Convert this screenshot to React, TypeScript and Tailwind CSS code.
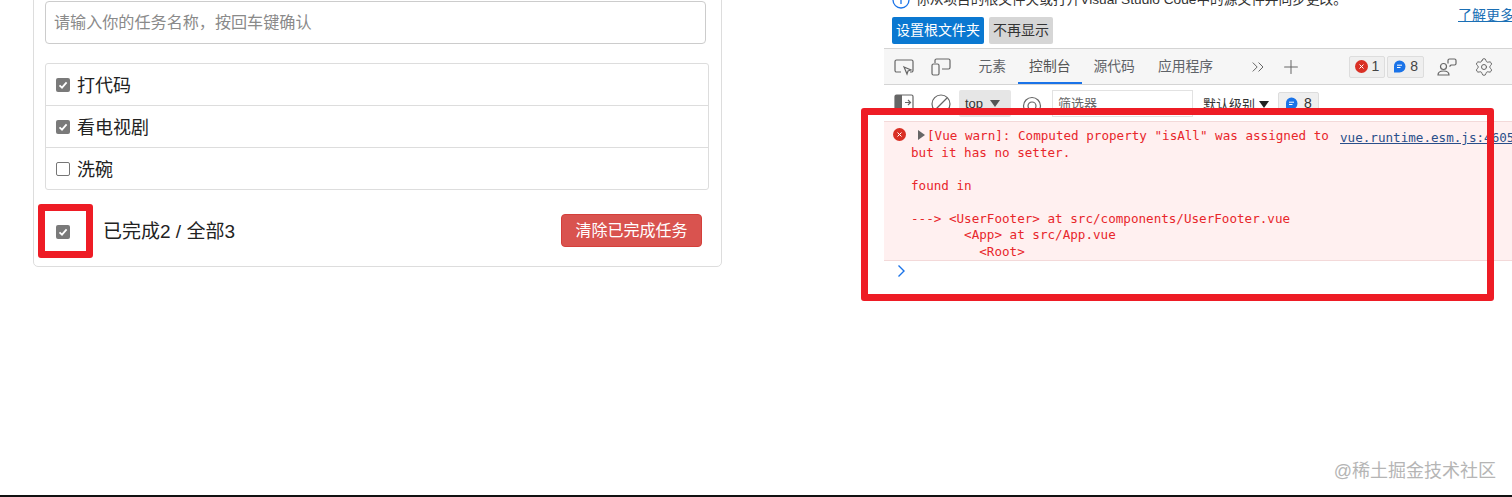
import { ChevronsRight, Plus, Settings } from "lucide-react";

const cjk = "font-['Liberation_Sans','Noto_Sans_CJK_SC',sans-serif]";

function Check({ checked }: { checked?: boolean }) {
  if (!checked) {
    return <div className="w-[14px] h-[14px] shrink-0 rounded-[2px] border border-[#767676] bg-white" />;
  }
  return (
    <div className="w-[14px] h-[14px] shrink-0 rounded-[2px] bg-[#7a7a7a] flex items-center justify-center">
      <svg width="12" height="12" viewBox="0 0 12 12" fill="none">
        <path d="M2.5 6.3 5 8.6 9.6 3.4" stroke="#fff" strokeWidth="1.8" />
      </svg>
    </div>
  );
}

function TodoRow({ label, checked, last }: { label: string; checked?: boolean; last?: boolean }) {
  return (
    <div className={`flex items-center pl-[10px] gap-[7px] text-[18px] text-[#222] ${last ? "h-[41px]" : "h-[42px] border-b border-[#ddd]"}`}>
      <Check checked={checked} />
      <span className="pt-[3px]">{label}</span>
    </div>
  );
}

function TodoCard() {
  return (
    <div className={`w-[689px] ml-[33px] -mt-[20px] h-[287px] border border-[#ddd] rounded-[5px] px-[11px] pt-[20px] ${cjk}`}>
      <div className="w-[661px] h-[43px] border border-[#ccc] rounded-[4px] flex items-center pl-[8px] text-[16.1px] text-[#8a8a8a]">
        请输入你的任务名称，按回车键确认
      </div>
      <div className="w-[664px] mt-[19px] border border-[#ddd] rounded-[3px]">
        <TodoRow label="打代码" checked />
        <TodoRow label="看电视剧" checked />
        <TodoRow label="洗碗" last />
      </div>
      <div className="w-[657px] mt-[24px] flex items-center pl-[11px] h-[36px]">
        <Check checked />
        <span className="ml-[33px] pt-[1px] text-[19px] text-[#222]">已完成2 / 全部3</span>
        <button className="ml-auto mb-[3px] w-[141px] h-[33px] rounded-[4px] bg-[#d9534f] border border-[#d43f3a] text-white text-[16px]">
          清除已完成任务
        </button>
      </div>
    </div>
  );
}

function InfoBubble() {
  return (
    <svg width="13" height="13" viewBox="0 0 13 13">
      <path d="M6.5.5a6 6 0 1 1 0 12H1V6.5a5.500 5.500 0 0 1 5.500-6z" fill="#1a73e8" />
      <path d="M4 5.200h5M4 7.500h3.500" stroke="#fff" strokeWidth="1" />
    </svg>
  );
}

function CountBadge({ n, kind }: { n: number; kind: "error" | "info" }) {
  return (
    <div className="h-[22px] flex items-center gap-[4px] px-[5px] bg-[#efefef] border border-[#ddd] rounded-[2px] text-[14px] text-[#444]">
      {kind === "error" ? (
        <svg width="13" height="13" viewBox="0 0 13 13">
          <circle cx="6.500" cy="6.500" r="6.500" fill="#d93025" />
          <path d="M4.500 4.500 8.500 8.500M8.500 4.500 4.500 8.500" stroke="#fff" strokeWidth="1" />
        </svg>
      ) : (
        <InfoBubble />
      )}
      <span>{n}</span>
    </div>
  );
}

function Tab({ label, active }: { label: string; active?: boolean }) {
  return (
    <div className={`h-[35px] flex items-center px-[11.500px] pt-[3px] text-[13.800px] border-b-2 ${active ? "text-[#555] border-[#1a73e8]" : "text-[#5f6368] border-transparent"}`}>
      {label}
    </div>
  );
}

function DevTools() {
  return (
    <div className={`w-[628px] shrink-0 h-[495px] overflow-hidden ${cjk}`}>
      {/* notification bar */}
      <div className="h-[48px] relative flex flex-col">
        <div className="flex items-center gap-[6px] pl-[8px] -mt-[7px] h-[14px] text-[13.700px] text-[#333] whitespace-nowrap">
          <svg width="18" height="18" viewBox="0 0 18 18" fill="none" className="shrink-0">
            <circle cx="9" cy="9" r="8" stroke="#1a73e8" strokeWidth="1.300" />
            <path d="M9 8v5M9 5v1.500" stroke="#1a73e8" strokeWidth="1.300" />
          </svg>
          <span>你从项目的根文件夹或打开Visual Studio Code中的源文件并同步更改。</span>
        </div>
        <div className="flex items-start pl-[8px] pt-[10px] gap-[5px] text-[14px]">
          <div className="w-[92px] h-[27px] bg-[#0a78d1] rounded-[2px] text-white flex items-center justify-center">设置根文件夹</div>
          <div className="w-[64px] h-[27px] bg-[#d6d6d6] rounded-[2px] text-[#333] flex items-center justify-center">不再显示</div>
        </div>
        <span className="absolute left-[574px] top-[5px] text-[14px] text-[#1a6fb5] underline whitespace-nowrap">了解更多</span>
      </div>

      {/* tab bar */}
      <div className="h-[37px] bg-[#f6f6f6] border-y border-[#d4d4d4] flex items-center pl-[10px] w-full">
        <svg width="20" height="18" viewBox="0 0 20 18" fill="none" stroke="#666" strokeWidth="1.200">
          <path d="M7 14H2.500A1.500 1.500 0 0 1 1 12.500v-9A1.500 1.500 0 0 1 2.500 2h15A1.500 1.500 0 0 1 19 3.500v9a1.500 1.500 0 0 1-1.500 1.500H16" />
          <path d="M10 9l7 3-3 1-1 3z" />
        </svg>
        <svg width="20" height="18" viewBox="0 0 20 18" fill="none" stroke="#666" strokeWidth="1.200" className="ml-[17px]">
          <rect x="1" y="6" width="7" height="11" rx="1.500" />
          <path d="M4 5V2.500A1.500 1.500 0 0 1 5.500 1h12A1.500 1.500 0 0 1 19 2.500v7a1.500 1.500 0 0 1-1.500 1.500H11" />
        </svg>
        <div className="flex items-center ml-[16px]">
          <Tab label="元素" />
          <Tab label="控制台" active />
          <Tab label="源代码" />
          <Tab label="应用程序" />
        </div>
        <ChevronsRight size={20} strokeWidth={1.200} className="ml-[23px] text-[#666]" />
        <Plus size={22} strokeWidth={1.100} className="ml-[12px] text-[#666]" />
        <div className="ml-[47px] flex items-center gap-[2px]">
          <CountBadge n={1} kind="error" />
          <CountBadge n={8} kind="info" />
        </div>
        <svg width="20" height="20" viewBox="0 0 20 20" fill="none" stroke="#666" strokeWidth="1.200" className="ml-[13px]">
          <circle cx="6.500" cy="9.500" r="3" />
          <path d="M1 18c0-3 2-4 5.500-4s5.500 1 5.500 4z" />
          <path d="M11 6.500V3.500A1.500 1.500 0 0 1 12.500 2h5A1.500 1.500 0 0 1 19 3.500v3A1.500 1.500 0 0 1 17.500 8H14l-1.500 1.500" />
        </svg>
        <Settings size={20} strokeWidth={1.200} className="ml-[17px] text-[#666]" />
      </div>

      {/* console toolbar */}
      <div className="h-[36px] flex items-start pt-[5px] pl-[10px] text-[13px] text-[#333]">
        <svg width="20" height="18" viewBox="0 0 20 18" fill="none" className="mt-[4px]">
          <rect x="1" y="1" width="18" height="15" rx="1.500" stroke="#666" strokeWidth="1.200" />
          <rect x="1" y="1" width="7" height="15" fill="#666" />
          <path d="M11 8.500h5M14 6l2.500 2.500L14 11" stroke="#666" strokeWidth="1.200" />
        </svg>
        <svg width="20" height="20" viewBox="0 0 20 20" fill="none" stroke="#666" strokeWidth="1.200" className="ml-[17px] mt-[4px]">
          <circle cx="10" cy="10" r="9" />
          <path d="M4 16 16 4" />
        </svg>
        <div className="ml-[8px] w-[52px] h-[27px] bg-[#e6e6e6] rounded-[2px] flex items-center pl-[6px] gap-[7px]">
          <span>top</span>
          <span className="w-0 h-0 border-x-[5px] border-x-transparent border-t-[7px] border-t-[#555]" />
        </div>
        <svg width="20" height="20" viewBox="0 0 20 20" fill="none" stroke="#666" strokeWidth="1.200" className="ml-[11px] mt-[6px]">
          <circle cx="10" cy="10" r="8.500" />
          <circle cx="10" cy="10" r="4" />
        </svg>
        <div className="ml-[10px] w-[141px] h-[27px] border border-[#e2e2e2] flex items-center pl-[5px] text-[#666]">筛选器</div>
        <div className="ml-[10px] mt-[5px] flex items-center gap-[4px]">
          <span>默认级别</span>
          <span className="w-0 h-0 border-x-[5px] border-x-transparent border-t-[7px] border-t-[#222]" />
        </div>
        <div className="ml-[9px] h-[22px] mt-[2px] flex items-center gap-[6px] px-[6px] bg-[#efefef] border border-[#ddd] rounded-[2px] text-[14px]">
          <InfoBubble />
          <span>8</span>
        </div>
      </div>

      {/* console output */}
      <div className="h-[140px] bg-[#fff0f0] border-y border-[#f3d9d9] flex pt-[6px] pl-[27px] font-['DejaVu_Sans_Mono',monospace] text-[12.600px] leading-[16.500px] text-[#e8262b] relative">
        <svg width="13" height="13" viewBox="0 0 13 13" className="absolute left-[9px] top-[6px]">
          <circle cx="6.500" cy="6.500" r="6.500" fill="#d93025" />
          <path d="M4.500 4.500 8.500 8.500M8.500 4.500 4.500 8.500" stroke="#fff" strokeWidth="1" />
        </svg>
        <pre className="w-[429px] shrink-0 font-['DejaVu_Sans_Mono',monospace]">
          <span className="inline-block w-[16px] pl-[7px] align-baseline">
            <span className="inline-block w-0 h-0 border-y-[5px] border-y-transparent border-l-[7px] border-l-[#666]" />
          </span>
          {`[Vue warn]: Computed property "isAll" was assigned to
but it has no setter.

found in

---> <UserFooter> at src/components/UserFooter.vue
       <App> at src/App.vue
         <Root>`}
        </pre>
        <span className="text-[#2a4f8a] underline whitespace-nowrap pt-[2px]">vue.runtime.esm.js:4605</span>
      </div>

      {/* prompt */}
      <div className="pl-[13px] pt-[3px]">
        <svg width="9" height="14" viewBox="0 0 9 14" fill="none">
          <path d="M1.500 1.500 7 7l-5.500 5.500" stroke="#1a73e8" strokeWidth="1.400" />
        </svg>
      </div>
    </div>
  );
}

export default function App() {
  return (
    <div className="relative w-[1512px] h-[497px] bg-white overflow-hidden">
      <div className="flex h-[495px]">
        <div className="w-[884px] shrink-0">
          <TodoCard />
        </div>
        <DevTools />
      </div>
      <div className="h-[2px] bg-[#111]" />

      {/* red annotation boxes */}
      <div className="absolute left-[38px] top-[204px] w-[55px] h-[54px] border-[7px] border-[#ee1c25] rounded-[3px]" />
      <div className="absolute left-[861px] top-[108px] w-[633px] h-[193px] border-[7px] border-[#ee1c25] rounded-[3px]" />

      {/* watermark */}
      <span className={`absolute right-[16px] top-[458px] text-[18px] text-[#b5b5b5] ${cjk}`}>@稀土掘金技术社区</span>
    </div>
  );
}
